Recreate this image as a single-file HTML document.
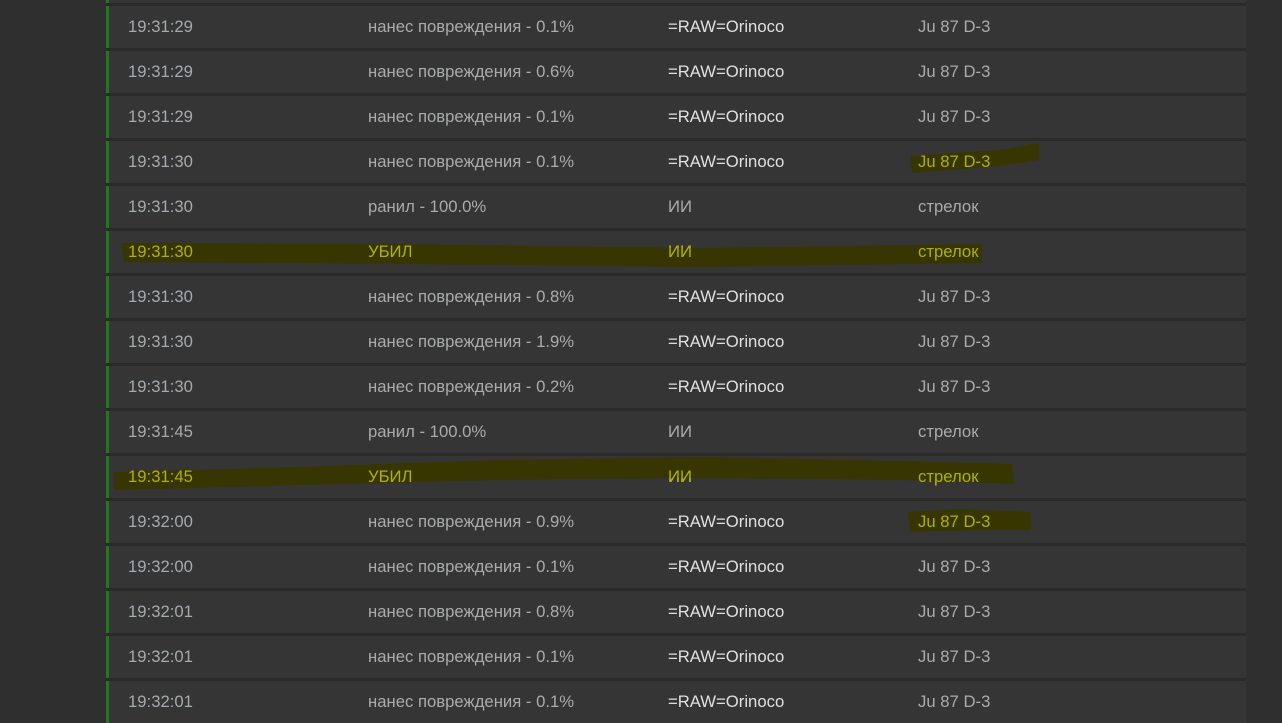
<!DOCTYPE html>
<html><head><meta charset="utf-8"><style>
html,body{margin:0;padding:0;width:1282px;height:707px;overflow:hidden;background:#2f2f2f;font-family:"Liberation Sans","DejaVu Sans",sans-serif;}
.wrap{position:absolute;left:106px;top:0;width:1140px;height:707px;background:#2a2a2a;}
.row{position:absolute;left:106px;width:1140px;height:42px;background:#353535;border-left:3px solid #1e7a1e;box-sizing:border-box;font-size:16.7px;color:#a9abad;}
.row span{position:absolute;top:11px;white-space:nowrap;}
.c1{left:19px;color:#a3aab2}.c2{left:259px}.c3{left:559px;color:#e0e0e0}.c4{left:809px}
svg{position:absolute;left:0;top:0}
.hl{position:absolute;left:0;top:0;font-size:16.7px;color:#b0b000;white-space:nowrap}
.hl span{position:absolute}
</style></head><body>
<div class="wrap"></div>
<div class="row" style="top:-39px"></div>
<div class="row" style="top:6px"><span class="c1">19:31:29</span><span class="c2">нанес повреждения - 0.1%</span><span class="c3">=RAW=Orinoco</span><span class="c4">Ju 87 D-3</span></div>
<div class="row" style="top:51px"><span class="c1">19:31:29</span><span class="c2">нанес повреждения - 0.6%</span><span class="c3">=RAW=Orinoco</span><span class="c4">Ju 87 D-3</span></div>
<div class="row" style="top:96px"><span class="c1">19:31:29</span><span class="c2">нанес повреждения - 0.1%</span><span class="c3">=RAW=Orinoco</span><span class="c4">Ju 87 D-3</span></div>
<div class="row" style="top:141px"><span class="c1">19:31:30</span><span class="c2">нанес повреждения - 0.1%</span><span class="c3">=RAW=Orinoco</span><span class="c4">Ju 87 D-3</span></div>
<div class="row" style="top:186px"><span class="c1">19:31:30</span><span class="c2">ранил - 100.0%</span><span class="c3" style="color:#a9abad">ИИ</span><span class="c4">стрелок</span></div>
<div class="row" style="top:231px"><span class="c1">19:31:30</span><span class="c2">УБИЛ</span><span class="c3">ИИ</span><span class="c4">стрелок</span></div>
<div class="row" style="top:276px"><span class="c1">19:31:30</span><span class="c2">нанес повреждения - 0.8%</span><span class="c3">=RAW=Orinoco</span><span class="c4">Ju 87 D-3</span></div>
<div class="row" style="top:321px"><span class="c1">19:31:30</span><span class="c2">нанес повреждения - 1.9%</span><span class="c3">=RAW=Orinoco</span><span class="c4">Ju 87 D-3</span></div>
<div class="row" style="top:366px"><span class="c1">19:31:30</span><span class="c2">нанес повреждения - 0.2%</span><span class="c3">=RAW=Orinoco</span><span class="c4">Ju 87 D-3</span></div>
<div class="row" style="top:411px"><span class="c1">19:31:45</span><span class="c2">ранил - 100.0%</span><span class="c3" style="color:#a9abad">ИИ</span><span class="c4">стрелок</span></div>
<div class="row" style="top:456px"><span class="c1">19:31:45</span><span class="c2">УБИЛ</span><span class="c3">ИИ</span><span class="c4">стрелок</span></div>
<div class="row" style="top:501px"><span class="c1">19:32:00</span><span class="c2">нанес повреждения - 0.9%</span><span class="c3">=RAW=Orinoco</span><span class="c4">Ju 87 D-3</span></div>
<div class="row" style="top:546px"><span class="c1">19:32:00</span><span class="c2">нанес повреждения - 0.1%</span><span class="c3">=RAW=Orinoco</span><span class="c4">Ju 87 D-3</span></div>
<div class="row" style="top:591px"><span class="c1">19:32:01</span><span class="c2">нанес повреждения - 0.8%</span><span class="c3">=RAW=Orinoco</span><span class="c4">Ju 87 D-3</span></div>
<div class="row" style="top:636px"><span class="c1">19:32:01</span><span class="c2">нанес повреждения - 0.1%</span><span class="c3">=RAW=Orinoco</span><span class="c4">Ju 87 D-3</span></div>
<div class="row" style="top:681px"><span class="c1">19:32:01</span><span class="c2">нанес повреждения - 0.1%</span><span class="c3">=RAW=Orinoco</span><span class="c4">Ju 87 D-3</span></div>
<svg width="1282" height="707">
<g fill="#383600">
<polygon points="910,156 1000,150 1038,143 1040,160 1000,166 912,173"/>
<polygon points="122,243 400,244 700,248 982,244 982,263 700,267 400,264 124,262"/>
<polygon points="114,472 300,467 500,460 700,457 900,461 1012,464 1014,484 900,480 700,478 500,480 300,485 114,490"/>
<polygon points="908,512 960,509 1030,512 1031,530 980,530 910,532"/>
</g></svg>
<div class="hl">
<span style="left:918px;top:152px">Ju 87 D-3</span>
<span style="left:128px;top:242px">19:31:30</span>
<span style="left:368px;top:242px">УБИЛ</span>
<span style="left:668px;top:242px">ИИ</span>
<span style="left:918px;top:242px">стрелок</span>
<span style="left:128px;top:467px">19:31:45</span>
<span style="left:368px;top:467px">УБИЛ</span>
<span style="left:668px;top:467px">ИИ</span>
<span style="left:918px;top:467px">стрелок</span>
<span style="left:918px;top:512px">Ju 87 D-3</span>
</div>
</body></html>
